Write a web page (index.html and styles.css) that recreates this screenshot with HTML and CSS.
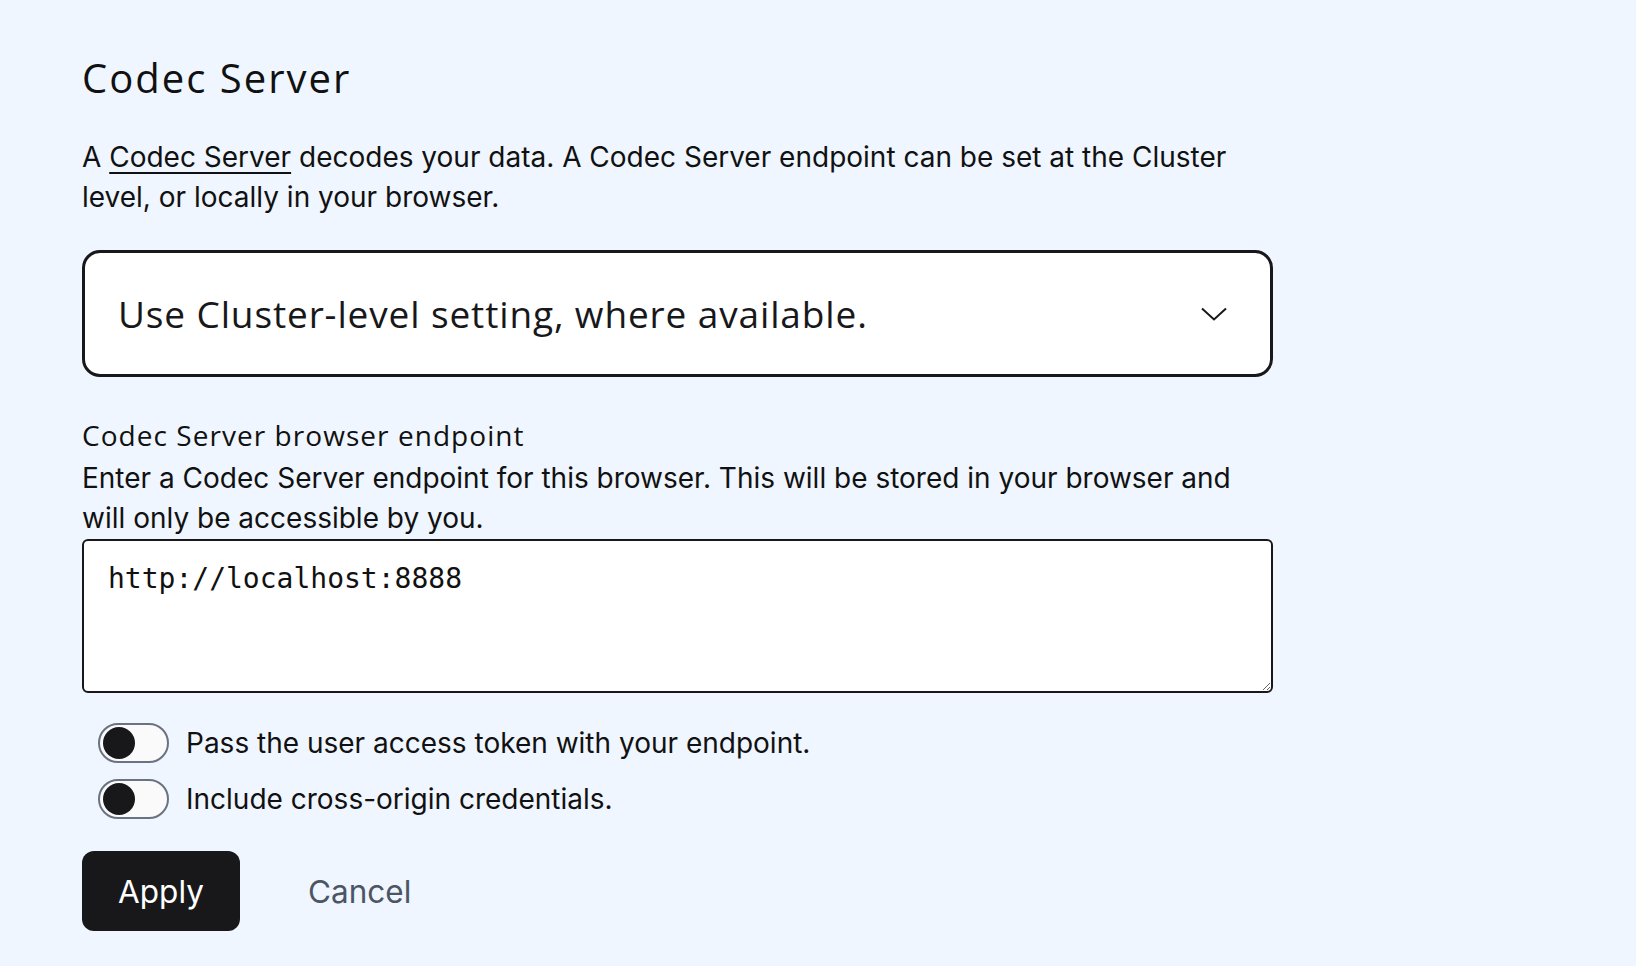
FILE: index.html
```html
<!DOCTYPE html>
<html lang="en">
<head>
<meta charset="utf-8">
<title>Codec Server</title>
<link rel="stylesheet" href="styles.css">
</head>
<body>
<main class="page">
  <h1 class="title">Codec Server</h1>
  <p class="intro">A <a class="link" href="#">Codec Server</a> decodes your data. A Codec Server endpoint can be set at the Cluster level, or locally in your browser.</p>

  <div class="select">
    <span class="select-value">Use Cluster-level setting, where available.</span>
    <svg class="chevron" width="26" height="14" viewBox="0 0 26 14" aria-hidden="true">
      <path d="M1 1.5 L13 12.5 L25 1.5" fill="none" stroke="#18181b" stroke-width="2"/>
    </svg>
  </div>

  <div class="field">
    <label class="field-label" for="endpoint">Codec Server browser endpoint</label>
    <p class="field-desc">Enter a Codec Server endpoint for this browser. This will be stored in your browser and will only be accessible by you.</p>
    <textarea id="endpoint" class="endpoint">http://localhost:8888</textarea>
  </div>

  <div class="toggles">
    <label class="toggle-row">
      <span class="toggle"><span class="knob"></span></span>
      <span class="toggle-label">Pass the user access token with your endpoint.</span>
    </label>
    <label class="toggle-row">
      <span class="toggle"><span class="knob"></span></span>
      <span class="toggle-label">Include cross-origin credentials.</span>
    </label>
  </div>

  <div class="actions">
    <button class="btn-primary">Apply</button>
    <button class="btn-ghost">Cancel</button>
  </div>
</main>
</body>
</html>
```

FILE: styles.css
```css
* { box-sizing: border-box; }

html, body {
  margin: 0;
  padding: 0;
  background: #eff6ff;
}

body {
  font-family: Inter, "Liberation Sans", sans-serif;
  color: #18181b;
}

.page {
  width: 1191px;
  margin-left: 82px;
  padding-top: 51px;
  display: flex;
  flex-direction: column;
}

.title {
  margin: 0;
  font-family: "Open Sans", "Noto Sans", sans-serif;
  font-weight: 400;
  font-size: 40px;
  letter-spacing: 2px;
  line-height: 54px;
  color: #111;
}

.intro {
  margin: 32px 0 0;
  font-size: 28px;
  line-height: 40px;
  color: #111;
}

.link {
  color: inherit;
  text-decoration: underline;
  text-underline-offset: 5px;
  text-decoration-thickness: 2px;
}

.select {
  margin-top: 33px;
  height: 127px;
  border: 3px solid #18181b;
  border-radius: 18px;
  background: #fff;
  display: flex;
  align-items: center;
  justify-content: space-between;
  padding: 0 43px 0 33px;
}

.select-value {
  font-family: "Open Sans", "Noto Sans", sans-serif;
  font-size: 37px;
  letter-spacing: 0.87px;
  color: #18181b;
}

.chevron { display: block; }

.field {
  margin-top: 38px;
  display: flex;
  flex-direction: column;
}

.field-label {
  font-family: "Open Sans", "Noto Sans", sans-serif;
  font-size: 28px;
  letter-spacing: 1.05px;
  line-height: 40px;
  color: #111;
}

.field-desc {
  margin: 3px 0 0;
  font-size: 28px;
  line-height: 40px;
  color: #111;
}

.endpoint {
  margin-top: 1px;
  height: 154px;
  width: 100%;
  border: 2px solid #18181b;
  border-radius: 6px;
  background: #fff;
  padding: 19px 24px;
  font-family: "DejaVu Sans Mono", "Liberation Mono", monospace;
  font-size: 28px;
  line-height: 38px;
  color: #111;
  resize: vertical;
  outline: none;
}

.toggles {
  margin-top: 30px;
  padding-left: 16px;
  display: flex;
  flex-direction: column;
  gap: 16px;
}

.toggle-row {
  display: flex;
  align-items: center;
  gap: 17px;
}

.toggle {
  width: 71px;
  height: 40px;
  border: 2px solid #6b7280;
  border-radius: 20px;
  background: #fafafa;
  display: flex;
  align-items: center;
  padding-left: 3px;
}

.knob {
  width: 32px;
  height: 32px;
  border-radius: 50%;
  background: #18181b;
}

.toggle-label {
  font-size: 28px;
  line-height: 40px;
  color: #111;
}

.actions {
  margin-top: 32px;
  display: flex;
  align-items: center;
  gap: 68px;
}

.btn-primary {
  width: 158px;
  height: 80px;
  border: none;
  border-radius: 12px;
  background: #18181b;
  color: #fff;
  font-family: Inter, sans-serif;
  font-size: 31.5px;
  cursor: pointer;
}

.btn-ghost {
  border: none;
  background: none;
  padding: 0;
  color: #4b5563;
  font-family: Inter, sans-serif;
  font-size: 31.5px;
  cursor: pointer;
}
```
